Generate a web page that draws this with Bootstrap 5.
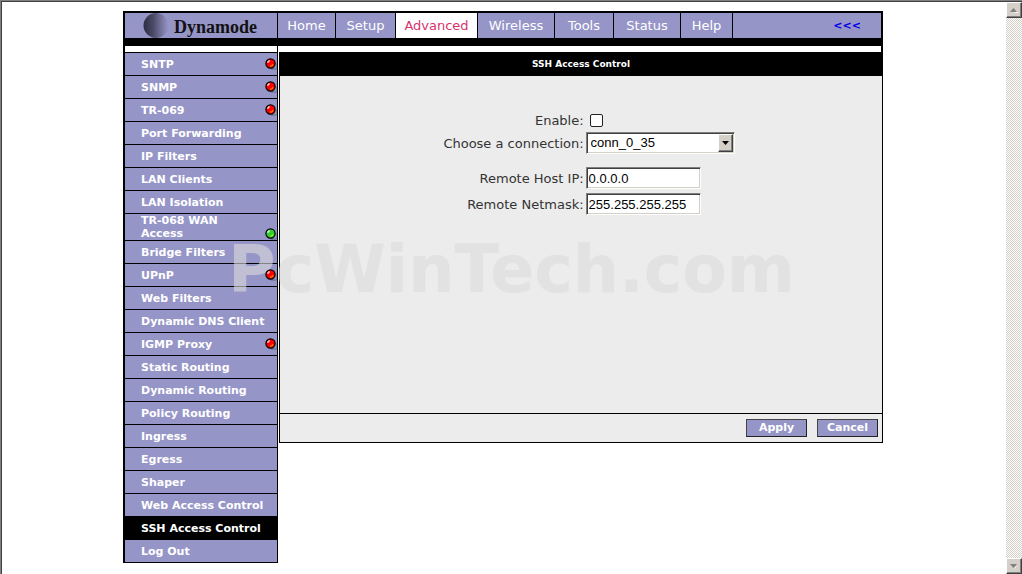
<!DOCTYPE html>
<html lang="en">
<head>
<meta charset="utf-8">
<meta name="viewport" content="width=device-width, initial-scale=1">
<title>SSH Access Control</title>
<link href="https://cdn.jsdelivr.net/npm/bootstrap@5.3.0/dist/css/bootstrap.min.css" rel="stylesheet">
<style>
  :root { --violet: #9695c8; --panel: #ececec; --face: #d4d0c8; }
  body { font-family: Verdana, "DejaVu Sans", sans-serif; font-size: 13px; line-height: 16px; color: #333; background: #fff; }
  a { text-decoration: none; }
  .window-frame { border: solid #808080; border-width: 1px 0 0 1px; padding: 1px 0 0 1px; box-shadow: inset 1px 1px #404040; }
  .page-area { padding: 9px 2px 0 0; }
  .router { max-width: 760px; }

  .top-bar { display: grid; grid-template-columns: 153px 58px 60px 82px 77px 59px 67px 52px 1fr; border: 2px solid #000; border-bottom: 8px solid #000; background: var(--violet); }
  .top-bar > * { height: 25px; border-right: 1px solid #000; color: #fff; }
  .top-bar .brand { padding-left: 17px; }
  .top-bar > :last-child { border-right: 0; color: #0000e8; padding-right: 20px; font-size: 11px; font-weight: bold; }
  .top-bar .current { background: #fff; color: #d6336c; }
  .brand-name { font: bold 18px/24px "Liberation Serif", serif; color: #111; padding-top: 3px; }
  .strip { height: 6px; border: solid #000; border-width: 0 2px; }
  .strip > div { width: 153px; border-right: 1px solid #000; }

  .side-menu { width: 155px; border: solid #000; border-width: 1px 1px 0 2px; }
  .side-menu a { min-height: 23px; padding: 0 0 0 16px; border-bottom: 1px solid #000; background: var(--violet); color: #fff; font-size: 11px; font-weight: bold; line-height: 13px; }
  .side-menu a.current { background: #000; }
  .side-menu svg { z-index: 2; }

  .content-panel { margin-left: 1px; border: 1px solid #000; background: var(--panel); }
  .content-title { height: 23px; margin: 0; background: #000; color: #fff; font-size: 9px; line-height: 23px; font-weight: bold; }
  .content-body { min-height: 337px; padding: 33px 0 0 16px; }
  .settings { display: grid; grid-template-columns: auto 149px; column-gap: 2px; grid-template-rows: 23px 22px 13px 22px 4px 22px; align-items: center; }
  .settings label { text-align: right; padding-top: 1px; }
  .gap-row { grid-column: 1 / 3; }
  .sunken { height: 22px; border: 1px solid; border-color: #808080 #fff #fff #808080; box-shadow: inset 1px 1px #404040, inset -1px -1px var(--face); border-radius: 0; background: #fff; color: #000; font: 13px/16px "Liberation Sans", Arial, sans-serif; padding: 2px; outline: 0; }
  input.sunken { width: 115px; }
  select.sunken { appearance: none; width: 149px; padding-left: 4px; }
  .tick { width: 13px; height: 13px; margin: 0 0 0 4px; appearance: none; border: 1px solid #222; border-radius: 2px; background: #fff; }
  .tick:checked { background: #404040; }
  .drop-arrow { top: 2px; right: 2px; width: 15px; height: 18px; pointer-events: none; }
  .raised { background: var(--face); border: 1px solid; border-color: #fff #404040 #404040 #fff; box-shadow: inset -1px -1px #808080; padding: 0; }
  .actions { height: 29px; border-top: 1px solid #000; padding-right: 4px; gap: 10px; }
  .actions .btn { width: 61px; height: 18px; padding: 0; border: 1px solid #222; border-color: #444 #222 #222 #444; border-radius: 0; background: var(--violet); color: #fff; font-size: 11px; font-weight: bold; line-height: 16px; }

  .watermark { top: 227px; left: 105px; font: bold 65px/64px "DejaVu Sans", sans-serif; color: rgba(220, 220, 220, .5); text-shadow: 0 0 1px rgba(220, 220, 220, .2); pointer-events: none; white-space: nowrap; }

  .scroll-track { width: 16px; background: repeating-conic-gradient(#fff 0 25%, var(--face) 0 50%) 0 0 / 2px 2px; }
  .scroll-track button { width: 16px; height: 16px; }
</style>
</head>
<body>
<svg width="0" height="0" class="position-absolute" aria-hidden="true">
  <defs>
    <g id="lamp-shape">
      <path d="M4 10h7V5l1 1v5l-1 1H6z" fill="#75809c"/>
      <circle cx="5.500" cy="5.500" r="4.600" fill="currentColor" stroke="#000" stroke-width="1.200"/>
      <path d="M3 5V3h2" fill="none" stroke="#fff"/>
      <path d="M5 8h2l1-2" fill="none" stroke="#ff0" stroke-opacity=".6"/>
    </g>
  </defs>
</svg>
<div class="window-frame d-flex min-vh-100">
  <main class="page-area flex-grow-1">
    <div class="router position-relative mx-auto">
      <nav class="top-bar text-center" aria-label="Main">
        <a href="#" class="brand d-flex align-items-center">
          <svg width="28" height="25" viewBox="0 0 28 25" aria-hidden="true">
            <defs><linearGradient id="globe"><stop offset="0" stop-color="#2c2c44"/><stop offset=".4" stop-color="#4d4c68"/><stop offset=".8" stop-color="#7f7eaa"/><stop offset="1" stop-color="#9695c8"/></linearGradient></defs>
            <circle cx="14" cy="12.500" r="12.500" fill="url(#globe)"/>
          </svg>
          <span class="brand-name ms-1">Dynamode</span>
        </a>
        <a href="#" class="d-flex align-items-center justify-content-center">Home</a>
        <a href="#" class="d-flex align-items-center justify-content-center">Setup</a>
        <a href="#" class="d-flex align-items-center justify-content-center current" aria-current="page">Advanced</a>
        <a href="#" class="d-flex align-items-center justify-content-center">Wireless</a>
        <a href="#" class="d-flex align-items-center justify-content-center">Tools</a>
        <a href="#" class="d-flex align-items-center justify-content-center">Status</a>
        <a href="#" class="d-flex align-items-center justify-content-center">Help</a>
        <a href="#" class="d-flex align-items-center justify-content-end">&lt;&lt;&lt;</a>
      </nav>
      <div class="strip d-flex"><div></div></div>
      <div class="d-flex align-items-start">
        <nav class="side-menu flex-shrink-0" aria-label="Advanced">
          <a href="#" class="d-flex align-items-center justify-content-between">SNTP <svg class="position-relative" width="12" height="12" color="#f00"><use href="#lamp-shape"/></svg></a>
          <a href="#" class="d-flex align-items-center justify-content-between">SNMP <svg class="position-relative" width="12" height="12" color="#f00"><use href="#lamp-shape"/></svg></a>
          <a href="#" class="d-flex align-items-center justify-content-between">TR-069 <svg class="position-relative" width="12" height="12" color="#f00"><use href="#lamp-shape"/></svg></a>
          <a href="#" class="d-flex align-items-center">Port Forwarding</a>
          <a href="#" class="d-flex align-items-center">IP Filters</a>
          <a href="#" class="d-flex align-items-center">LAN Clients</a>
          <a href="#" class="d-flex align-items-center">LAN Isolation</a>
          <a href="#" class="d-flex align-items-end justify-content-between"><span>TR-068 WAN<br>Access</span> <svg class="position-relative" width="12" height="12" color="#2fd12f"><use href="#lamp-shape"/></svg></a>
          <a href="#" class="d-flex align-items-center">Bridge Filters</a>
          <a href="#" class="d-flex align-items-center justify-content-between">UPnP <svg class="position-relative" width="12" height="12" color="#f00"><use href="#lamp-shape"/></svg></a>
          <a href="#" class="d-flex align-items-center">Web Filters</a>
          <a href="#" class="d-flex align-items-center">Dynamic DNS Client</a>
          <a href="#" class="d-flex align-items-center justify-content-between">IGMP Proxy <svg class="position-relative" width="12" height="12" color="#f00"><use href="#lamp-shape"/></svg></a>
          <a href="#" class="d-flex align-items-center">Static Routing</a>
          <a href="#" class="d-flex align-items-center">Dynamic Routing</a>
          <a href="#" class="d-flex align-items-center">Policy Routing</a>
          <a href="#" class="d-flex align-items-center">Ingress</a>
          <a href="#" class="d-flex align-items-center">Egress</a>
          <a href="#" class="d-flex align-items-center">Shaper</a>
          <a href="#" class="d-flex align-items-center text-nowrap">Web Access Control</a>
          <a href="#" class="d-flex align-items-center text-nowrap current" aria-current="page">SSH Access Control</a>
          <a href="#" class="d-flex align-items-center">Log Out</a>
        </nav>
        <form class="content-panel flex-grow-1">
          <h1 class="content-title text-center">SSH Access Control</h1>
          <div class="content-body">
            <div class="settings justify-content-center">
              <label for="enable">Enable:</label>
              <input class="tick" type="checkbox" id="enable">
              <label for="connection">Choose a connection:</label>
              <div class="position-relative d-flex">
                <select class="sunken" id="connection"><option>conn_0_35</option></select>
                <span class="drop-arrow raised position-absolute d-flex align-items-center justify-content-center"><svg width="7" height="4" aria-hidden="true"><path d="M0 0h7L3.500 4z"/></svg></span>
              </div>
              <span class="gap-row"></span>
              <label for="host">Remote Host IP:</label>
              <input class="sunken" type="text" id="host" value="0.0.0.0">
              <span class="gap-row"></span>
              <label for="netmask">Remote Netmask:</label>
              <input class="sunken" type="text" id="netmask" value="255.255.255.255">
            </div>
          </div>
          <div class="actions d-flex align-items-center justify-content-end">
            <button type="button" class="btn">Apply</button>
            <button type="button" class="btn">Cancel</button>
          </div>
        </form>
      </div>
      <div class="watermark position-absolute">PcWinTech.com</div>
    </div>
  </main>
  <div class="scroll-track d-flex flex-column justify-content-between">
    <button type="button" class="raised d-flex align-items-center justify-content-center" aria-label="Scroll up"><svg width="8" height="5"><path d="M1 5h7v-1z" fill="#fff"/><path d="M0 4h7L3.500 0z" fill="#808080"/></svg></button>
    <button type="button" class="raised d-flex align-items-center justify-content-center" aria-label="Scroll down"><svg width="8" height="5"><path d="M8 1L4 5V4z" fill="#fff"/><path d="M0 0h7L3.500 4z" fill="#808080"/></svg></button>
  </div>
</div>
<script src="https://cdn.jsdelivr.net/npm/bootstrap@5.3.0/dist/js/bootstrap.bundle.min.js"></script>
</body>
</html>
